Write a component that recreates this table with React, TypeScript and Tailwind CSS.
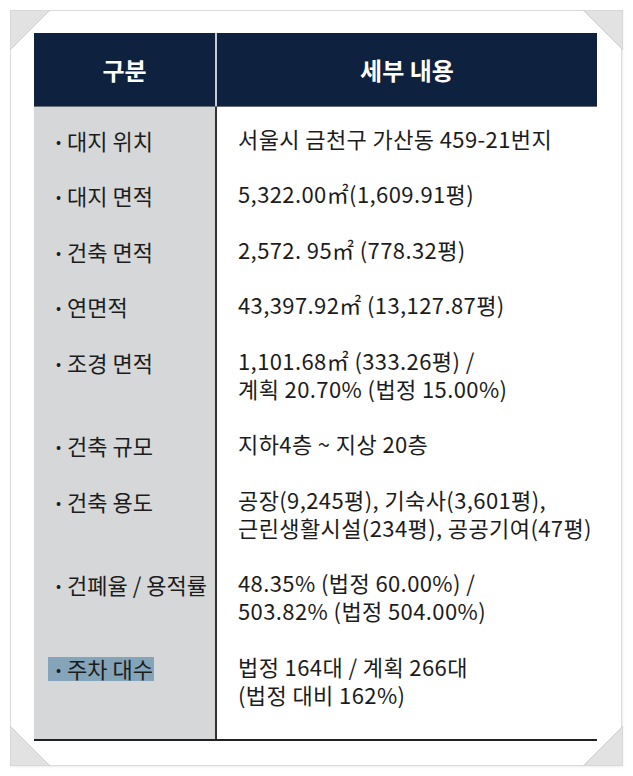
import React from 'react';

type Row = { label: string; lines: string[]; highlight?: boolean };

const rows: Row[] = [
  { label: '대지 위치', lines: ['서울시 금천구 가산동 459-21번지'] },
  { label: '대지 면적', lines: ['5,322.00㎡(1,609.91평)'] },
  { label: '건축 면적', lines: ['2,572. 95㎡ (778.32평)'] },
  { label: '연면적', lines: ['43,397.92㎡ (13,127.87평)'] },
  { label: '조경 면적', lines: ['1,101.68㎡ (333.26평) /', '계획 20.70% (법정 15.00%)'] },
  { label: '건축 규모', lines: ['지하4층 ~ 지상 20층'] },
  { label: '건축 용도', lines: ['공장(9,245평), 기숙사(3,601평),', '근린생활시설(234평), 공공기여(47평)'] },
  { label: '건폐율 / 용적률', lines: ['48.35% (법정 60.00%) /', '503.82% (법정 504.00%)'] },
  { label: '주차 대수', lines: ['법정 164대 / 계획 266대', '(법정 대비 162%)'], highlight: true },
];

// folded page corner
function Corner({ className, points }: { className: string; points: string }) {
  return (
    <svg className={className} width="40" height="40" viewBox="0 0 40 40">
      <polygon points={points} fill="#e2e2e2" stroke="#cfcfcf" strokeWidth="1" />
    </svg>
  );
}

export default function App() {
  return (
    <div
      className="relative w-[633px] h-[776px] bg-white text-[#1c1c1c] p-[10px] pr-[11px]"
      style={{ fontFamily: '"Noto Sans CJK KR", "Noto Sans", sans-serif' }}
    >
      <div className="h-[756px] border border-[#dcdcdc] shadow-[1px_1px_2px_rgba(0,0,0,0.08)] pl-[23px] pt-[22px] pr-[24px]">
        {/* header */}
        <div className="flex h-[74px] bg-[#0e2240] text-white text-[24px] font-bold border-b border-[#6b6f76]">
          <div className="w-[183px] flex items-center justify-center border-r-2 border-[#c8ccd2]">구분</div>
          <div className="flex-1 flex items-center justify-center">세부 내용</div>
        </div>

        {/* body */}
        <div className="flex border-b-2 border-[#222] text-[22px]">
          <div className="w-[183px] bg-[#d6d7d9] border-r-2 border-[#333] pt-[3px] pb-[17px]">
            {rows.map((r) => (
              <div
                key={r.label}
                className="py-[13.75px] pl-[14px]"
                style={{ height: r.lines.length * 28 + 27.5 }}
              >
                <span
                  className={
                    'inline-block h-[24px] mt-[4px] leading-[22px] pl-[8px] pr-[1px] whitespace-nowrap ' +
                    (r.highlight ? 'bg-[#84a4ba]' : '')
                  }
                >
                  <span className="mr-[6px] text-[15px] align-[3px]">•</span>
                  {r.label}
                </span>
              </div>
            ))}
          </div>
          <div className="flex-1 pt-[3px] pb-[17px] tracking-[0.4px]">
            {rows.map((r) => (
              <div key={r.label} className="py-[13.75px] pl-[21px]">
                {r.lines.map((l) => (
                  <div key={l} className="h-[28px] leading-[28px] whitespace-nowrap">
                    {l}
                  </div>
                ))}
              </div>
            ))}
          </div>
        </div>
      </div>

      <Corner className="absolute left-[10px] top-[10px]" points="0,0 40,0 0,40" />
      <Corner className="absolute left-[583px] top-[10px]" points="0,0 40,0 40,40" />
      <Corner className="absolute left-[10px] top-[726px]" points="0,0 0,40 40,40" />
      <Corner className="absolute left-[583px] top-[726px]" points="40,0 40,40 0,40" />
    </div>
  );
}
